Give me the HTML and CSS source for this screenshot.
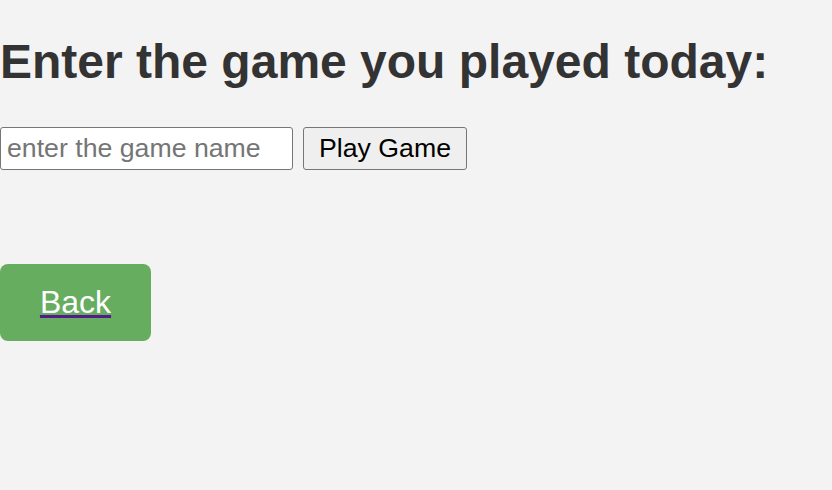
FILE: index.html
```html
<!DOCTYPE html>
<html>
<head>
<meta charset="utf-8">
<link rel="stylesheet" href="styles.css">
</head>
<body>
<h1 class="title">Enter the game you played today:</h1>
<form class="game-form">
  <input class="game-input" type="text" placeholder="enter the game name">
  <button class="play-btn" type="button">Play Game</button>
</form>
<div class="back-wrap">
  <a class="back-btn" href="#">Back</a>
</div>
</body>
</html>
```
FILE: styles.css
```css
html, body {
  margin: 0;
  padding: 0;
  background: #f3f3f3;
  font-family: "Liberation Sans", Arial, sans-serif;
}
.title {
  margin: 0;
  padding-top: 34px;
  font-size: 48px;
  font-weight: bold;
  color: #333333;
  line-height: 55px;
}
.game-form {
  display: flex;
  align-items: center;
  gap: 10px;
  margin-top: 38px;
}
.game-input {
  box-sizing: border-box;
  width: 293px;
  height: 43px;
  margin: 0;
  padding: 0 6px;
  font-family: "Liberation Sans", Arial, sans-serif;
  font-size: 26.7px;
  border: 1px solid #767676;
  border-radius: 3px;
  background: #fff;
}
.game-input::placeholder {
  color: #757575;
}
.play-btn {
  box-sizing: border-box;
  height: 43px;
  margin: 0;
  padding: 0 15px;
  font-family: "Liberation Sans", Arial, sans-serif;
  font-size: 26.7px;
  color: #000;
  background: #efefef;
  border: 1px solid #767676;
  border-radius: 3px;
}
.back-wrap {
  margin-top: 94px;
  display: flex;
}
.back-btn {
  display: block;
  box-sizing: border-box;
  width: 151px;
  height: 77px;
  line-height: 77px;
  text-align: center;
  background: #66ad5f;
  color: #fff;
  font-size: 32px;
  border-radius: 8px;
  text-decoration: underline;
  text-decoration-color: #551a8b;
  text-decoration-thickness: 3px;
}
```
